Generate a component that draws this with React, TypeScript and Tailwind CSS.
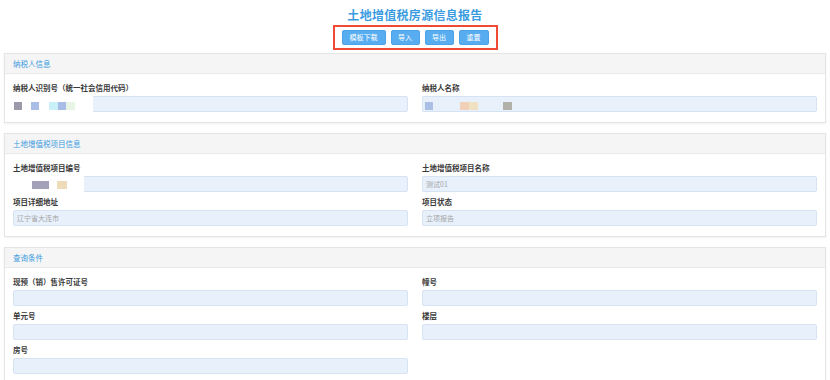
import React from "react";

type Sq = { l: number; w: number; c: string; t?: number; h?: number };

function Field({
  label,
  value,
  patch,
  squares,
}: {
  label: string;
  value?: string;
  patch?: number;
  squares?: Sq[];
}) {
  return (
    <div className="flex flex-col">
      <div className="text-[7.5px] leading-[10px] mb-[3px] text-[#3a3a3a] font-bold">{label}</div>
      <div className="relative h-[16px] bg-[#e7f0fb] border border-[#d6e3f3] rounded-[2px] flex items-center pl-[3px] text-[7px] text-[#a5a5a5]">
        {value}
        {patch ? (
          <div className="absolute left-[-1px] top-[-1px] h-[16px] bg-white" style={{ width: patch }} />
        ) : null}
        {squares?.map((s, i) => (
          <div
            key={i}
            className="absolute"
            style={{ left: s.l, width: s.w, top: s.t ?? 5, height: s.h ?? 8, background: s.c }}
          />
        ))}
      </div>
    </div>
  );
}

function Card({ title, children }: { title: string; children: React.ReactNode }) {
  return (
    <div className="bg-white border border-[#e4e4e4] shadow-[0_1px_2px_rgba(0,0,0,0.06)]">
      <div className="h-[20px] bg-[#f5f5f5] border-b border-[#e9e9e9] px-[8px] flex items-center text-[7.5px] text-[#3b9be0]">
        {title}
      </div>
      <div className="px-[8px] pt-[9px] pb-[10px] grid grid-cols-2 gap-x-[14px] gap-y-[5px]">{children}</div>
    </div>
  );
}

export default function App() {
  return (
    <div
      className="w-[830px] h-[380px] bg-white overflow-hidden"
      style={{ fontFamily: '"Noto Sans CJK SC", "Noto Sans", sans-serif' }}
    >
      <div className="pt-[7px] text-center text-[12px] leading-[15px] font-bold text-[#3a9be0] tracking-[0.3px]">
        土地增值税房源信息报告
      </div>
      <div className="flex justify-center mt-[3px]">
        <div className="border-2 border-[#ef4a35] px-[7px] py-[3px] flex gap-[5px]">
          {[
            ["模板下载", "w-[44px]"],
            ["导入", "w-[29px]"],
            ["导出", "w-[29px]"],
            ["重置", "w-[30px]"],
          ].map(([t, w]) => (
            <div
              key={t}
              className={`${w} h-[15px] bg-[#58adf0] border border-[#4ea3e8] rounded-[2px] text-white text-[7px] flex items-center justify-center`}
            >
              {t}
            </div>
          ))}
        </div>
      </div>
      <div className="px-[4px] mt-[3px] flex flex-col gap-[10px]">
        <Card title="纳税人信息">
          <Field
            label="纳税人识别号（统一社会信用代码）"
            patch={80}
            squares={[
              { l: 0, w: 8, c: "#9c9aab" },
              { l: 17, w: 8, c: "#a9bde6" },
              { l: 35, w: 9, c: "#c9eff7" },
              { l: 44, w: 8, c: "#a8bde5" },
              { l: 52, w: 9, c: "#e8f4e6" },
            ]}
          />
          <Field
            label="纳税人名称"
            squares={[
              { l: 2, w: 8, c: "#a9bfe6" },
              { l: 37, w: 9, c: "#f1d0b8" },
              { l: 46, w: 9, c: "#f0e1c2" },
              { l: 80, w: 9, c: "#b2b1a9" },
            ]}
          />
        </Card>
        <Card title="土地增值税项目信息">
          <Field
            label="土地增值税项目编号"
            patch={71}
            squares={[
              { l: 18, w: 17, c: "#a2a1b8", t: 4 },
              { l: 43, w: 10, c: "#eedcb9", t: 4 },
            ]}
          />
          <Field label="土地增值税项目名称" value="测试01" />
          <Field label="项目详细地址" value="辽宁省大连市" />
          <Field label="项目状态" value="立项报告" />
        </Card>
        <Card title="查询条件">
          <Field label="现预（销）售许可证号" />
          <Field label="幢号" />
          <Field label="单元号" />
          <Field label="楼层" />
          <Field label="房号" />
        </Card>
      </div>
    </div>
  );
}
